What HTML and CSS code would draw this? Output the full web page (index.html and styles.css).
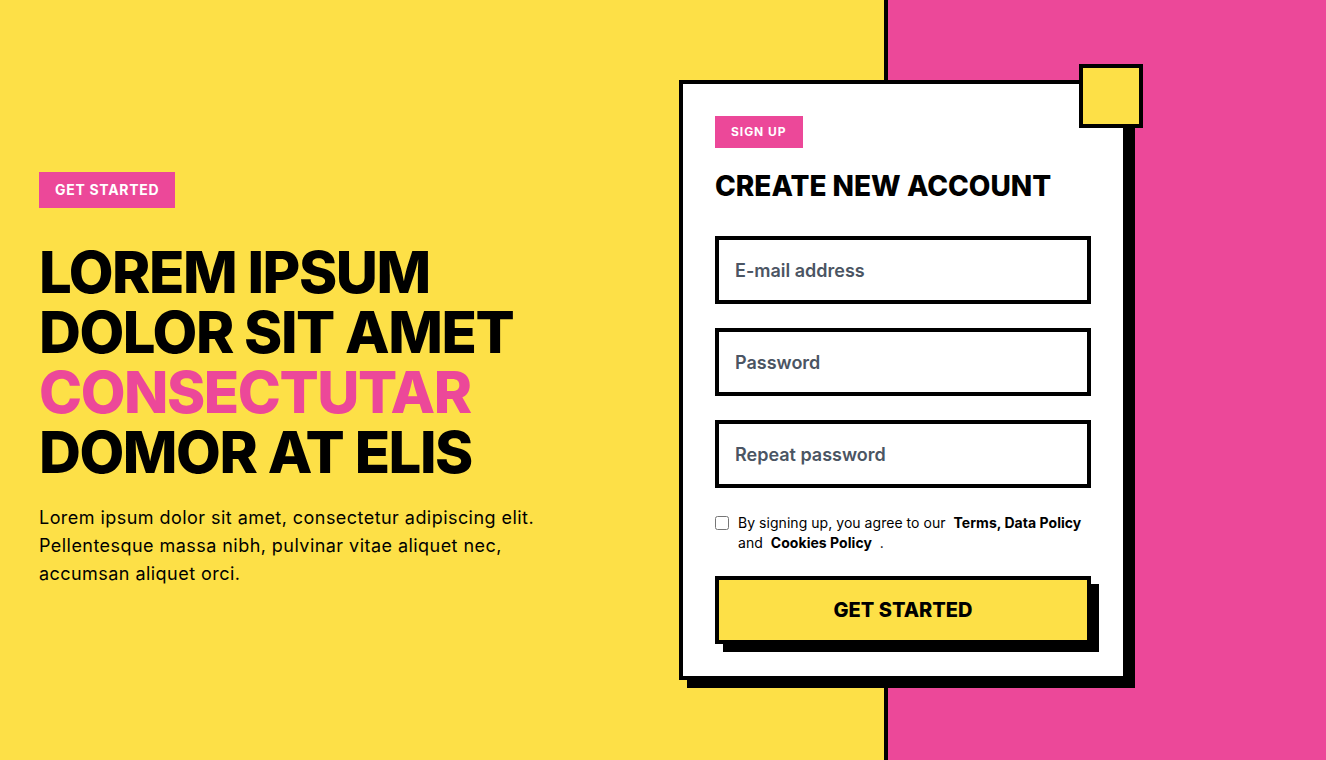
FILE: index.html
```html
<!DOCTYPE html>
<html lang="en">
<head>
<meta charset="utf-8">
<title>Create new account</title>
<link rel="stylesheet" href="styles.css">
</head>
<body>
<main class="page">
  <section class="hero">
    <span class="badge badge-lg">GET STARTED</span>
    <h1 class="hero-title">LOREM IPSUM<br>DOLOR SIT AMET<br><span class="accent">CONSECTUTAR</span><br>DOMOR AT ELIS</h1>
    <p class="hero-text">Lorem ipsum dolor sit amet, consectetur adipiscing elit. Pellentesque massa nibh, pulvinar vitae aliquet nec, accumsan aliquet orci.</p>
  </section>
  <section class="side">
    <form class="card">
      <span class="corner"></span>
      <span class="badge badge-sm">SIGN UP</span>
      <h2 class="card-title">CREATE NEW ACCOUNT</h2>
      <div class="fields">
        <input class="field" type="email" placeholder="E-mail address">
        <input class="field" type="password" placeholder="Password">
        <input class="field" type="password" placeholder="Repeat password">
      </div>
      <label class="agree">
        <input class="check" type="checkbox">
        <span class="agree-text">By signing up, you agree to our <b class="link">Terms, Data Policy</b> and <b class="link">Cookies Policy</b> .</span>
      </label>
      <button class="submit" type="button">GET STARTED</button>
    </form>
  </section>
</main>
</body>
</html>
```

FILE: styles.css
```css
* { box-sizing: border-box; }

html, body {
  margin: 0;
  padding: 0;
}

body {
  font-family: Inter, "Noto Sans", "Liberation Sans", sans-serif;
  color: #000;
  min-height: 100vh;
  background: linear-gradient(90deg, #fde047 0, #fde047 calc(67% - 4px), #000 calc(67% - 4px), #000 67%, #ec4899 67%);
}

.page {
  display: grid;
  grid-template-columns: 1fr 1fr;
  align-items: center;
  min-height: 100vh;
}

.hero {
  padding-left: 39px;
}

.badge {
  display: inline-block;
  background: #ec4899;
  color: #fff;
  font-weight: 700;
}

.badge-lg {
  height: 36px;
  line-height: 36px;
  padding: 0 16px;
  font-size: 14px;
  letter-spacing: 0.05em;
}

.badge-sm {
  height: 32px;
  line-height: 32px;
  padding: 0 16px;
  font-size: 12px;
  letter-spacing: 0.08em;
}

.hero-title {
  margin: 34px 0 0;
  font-size: 58px;
  line-height: 60px;
  font-weight: 800;
  letter-spacing: -0.025em;
}

.accent { color: #ec4899; }

.hero-text {
  margin: 22px 0 0;
  font-size: 18px;
  line-height: 28px;
  letter-spacing: 0.025em;
  max-width: 520px;
}

.side {
  padding-left: 16px;
}

.card {
  position: relative;
  width: 448px;
  background: #fff;
  border: 4px solid #000;
  padding: 32px;
  box-shadow: 8px 8px 0 #000;
}

.corner {
  position: absolute;
  top: -20px;
  right: -20px;
  width: 64px;
  height: 64px;
  background: #fde047;
  border: 4px solid #000;
}

.card-title {
  margin: 20px 0 0;
  font-size: 28px;
  line-height: 36px;
  font-weight: 800;
  letter-spacing: 0;
}

.fields {
  display: flex;
  flex-direction: column;
  gap: 24px;
  margin-top: 32px;
}

.field {
  display: block;
  width: 100%;
  height: 68px;
  border: 4px solid #000;
  border-radius: 0;
  padding: 0 16px;
  font-family: inherit;
  font-size: 18px;
  font-weight: 600;
  color: #111;
  background: #fff;
  outline: none;
}

.field::placeholder {
  color: #4b5563;
  opacity: 1;
}

.agree {
  display: flex;
  align-items: flex-start;
  gap: 9px;
  margin-top: 25px;
  font-size: 14px;
  line-height: 20px;
  letter-spacing: 0.003em;
}

.check {
  width: 14px;
  height: 14px;
  margin: 3px 0 0;
  flex: none;
}

.link {
  font-weight: 700;
  padding: 0 4px;
}

.submit {
  display: block;
  width: 100%;
  height: 68px;
  margin-top: 23px;
  border: 4px solid #000;
  border-radius: 0;
  background: #fde047;
  box-shadow: 8px 8px 0 #000;
  font-family: inherit;
  font-size: 20px;
  font-weight: 800;
  color: #000;
  cursor: pointer;
}
```
